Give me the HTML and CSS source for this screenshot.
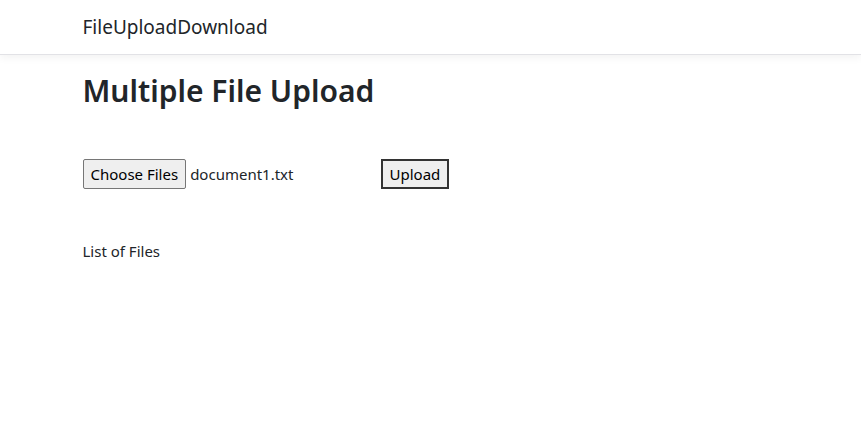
FILE: index.html
```html
<!DOCTYPE html>
<html>
  <head>
    <link rel="stylesheet" href="styles.css">
  </head>
  <body>
    <header class="navbar">
      <div class="container">
        <a class="brand" href="#">FileUploadDownload</a>
      </div>
    </header>

    <main class="container">
      <h1 class="title">Multiple File Upload</h1>

      <form class="upload-form">
        <div class="file-input">
          <button type="button" class="choose-btn">Choose Files</button>
          <span class="file-name">document1.txt</span>
        </div>
        <button type="button" class="upload-btn">Upload</button>
      </form>

      <p class="list-title">List of Files</p>
    </main>
  </body>
</html>
```

FILE: styles.css
```css
body {
  margin: 0;
  font-family: "Noto Sans", "Open Sans", sans-serif;
  font-size: 15px;
  color: #212529;
  background-color: #fff;
}

.container {
  width: 720px;
  margin: 0 auto;
  padding: 0 12px;
  box-sizing: border-box;
}

.navbar {
  height: 54px;
  border-bottom: 1px solid #e2e2e6;
  box-shadow: 0 3px 8px rgba(0, 0, 0, 0.05);
  display: flex;
  align-items: center;
}

.brand {
  font-size: 19px;
  color: #212529;
  text-decoration: none;
}

.title {
  font-size: 30px;
  font-weight: 600;
  margin: 18px 0 0;
  line-height: 1.2;
}

.upload-form {
  display: flex;
  align-items: center;
  margin-top: 50px;
}

.file-input {
  width: 294px;
  display: flex;
  align-items: center;
}

.choose-btn,
.upload-btn {
  font-family: inherit;
  font-size: 15px;
  color: #000;
  background-color: #efefef;
  padding: 1px 7px;
  height: 30px;
}

.choose-btn {
  border: 1px solid #767676;
  border-radius: 2px;
}

.file-name {
  margin-left: 4px;
}

.upload-btn {
  margin-left: 4px;
  border: 2px solid #333;
  border-radius: 0;
}

.list-title {
  margin: 52px 0 0;
}
```
